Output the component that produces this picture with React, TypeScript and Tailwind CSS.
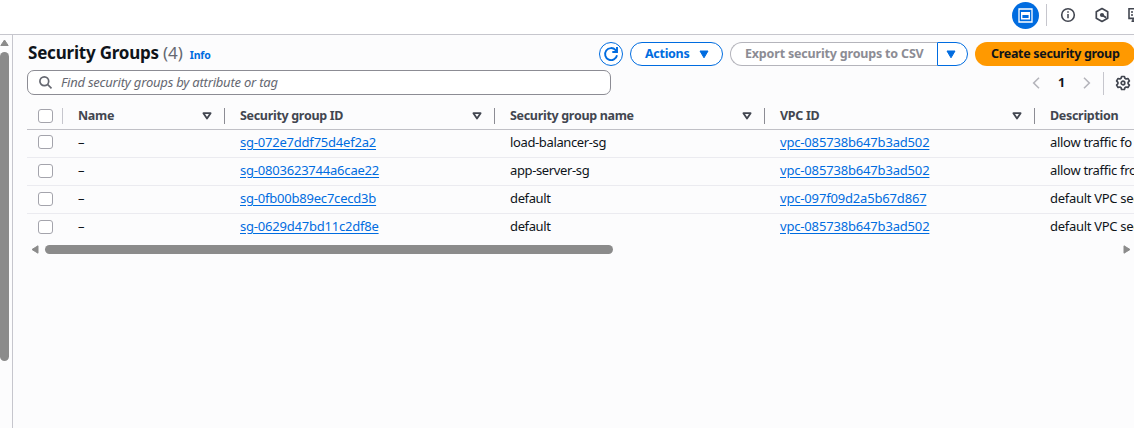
import type { ReactNode } from "react";

type Row = { id: string; name: string; vpc: string; description: string };

const rows: Row[] = [
  { id: "sg-072e7ddf75d4ef2a2", name: "load-balancer-sg", vpc: "vpc-085738b647b3ad502", description: "allow traffic fo" },
  { id: "sg-0803623744a6cae22", name: "app-server-sg", vpc: "vpc-085738b647b3ad502", description: "allow traffic fro" },
  { id: "sg-0fb00b89ec7cecd3b", name: "default", vpc: "vpc-097f09d2a5b67d867", description: "default VPC sec" },
  { id: "sg-0629d47bd11c2df8e", name: "default", vpc: "vpc-085738b647b3ad502", description: "default VPC sec" },
];

const gridCols = "grid w-[1240px] grid-cols-[36px_162px_270px_270px_270px_232px]";

function Checkbox() {
  return <span className="block h-[14px] w-[15px] shrink-0 rounded-[3px] border border-[#a4a4ac] bg-white" />;
}

function Caret() {
  return (
    <svg width="10" height="9" viewBox="0 0 10 9" className="shrink-0">
      <path d="M1 1h8L5 7.8z" fill="#006ce0" stroke="#006ce0" strokeLinejoin="round" />
    </svg>
  );
}

function HeaderCell({ children, sortable = true }: { children: ReactNode; sortable?: boolean }) {
  return (
    <div className="flex h-full items-center justify-between pr-[13px] pl-[15px]">
      <span>{children}</span>
      {sortable && (
        <svg width="10" height="8" viewBox="0 0 10 8" className="mt-px mr-[-1px]">
          <path d="M1.4 1.2h7.2L5 6.6z" fill="none" stroke="#424650" strokeWidth="1.8" strokeLinejoin="round" />
        </svg>
      )}
    </div>
  );
}

function TopBar() {
  return (
    <header className="flex h-[35px] shrink-0 border-b border-[#c6c6cd] bg-white pl-[1012px]">
      <span className="mt-[2px] flex h-[27px] w-[27px] shrink-0 items-center justify-center rounded-full bg-[#006ce0]">
        <svg width="15" height="15" viewBox="0 0 15 15" fill="none">
          <path d="M1 1h13v13H1z" stroke="#fff" strokeWidth="1.3" />
          <path d="M3.7 4.7h7.6v6H3.7z" stroke="#fff" strokeWidth="1.4" />
          <path d="M3 4h9v3H3z" fill="#fff" />
        </svg>
      </span>
      <span className="mt-[4px] ml-[7px] h-[22px] w-px shrink-0 bg-[#c6c6cd]" />
      <svg width="16" height="16" viewBox="0 0 16 16" fill="none" className="mt-[7px] ml-[13px] shrink-0">
        <circle cx="8" cy="8" r="6.3" stroke="#424650" strokeWidth="1.6" />
        <path d="M8 7v4.2M8 4.3v1.4" stroke="#424650" strokeWidth="1.5" />
      </svg>
      <svg width="16" height="16" viewBox="0 0 16 16" fill="none" className="mt-[7px] ml-[18px] shrink-0">
        <path d="M8 1.5l5.7 3.2v6.6L8 14.5l-5.7-3.2V4.7z" stroke="#424650" strokeWidth="1.7" strokeLinejoin="round" />
        <circle cx="8" cy="8" r="2.1" fill="#424650" />
        <path d="M8.5 8.2l3.7 2.6" stroke="#424650" strokeWidth="1.8" />
      </svg>
      <svg width="16" height="16" viewBox="0 0 16 16" fill="none" className="mt-[7px] ml-[17px] shrink-0">
        <path d="M2 1.8h12v9.6H2zM4.5 14.2h7M6 11.4v3" stroke="#424650" strokeWidth="1.6" />
        <path d="M4 5h2M4 8h2" stroke="#424650" strokeWidth="1.4" />
      </svg>
    </header>
  );
}

function Toolbar() {
  return (
    <div className="mt-[7px] flex h-[24px] items-center text-[12.5px] font-bold">
      <h1 className="mt-[-2px] flex w-[571px] shrink-0 items-baseline whitespace-nowrap text-[#0f141a]">
        <span className="text-[17px] tracking-[-0.21px]">Security Groups</span>
        <span className="ml-[4px] text-[17px] font-normal text-[#656871]">(4)</span>
        <span className="ml-[7px] text-[10.5px] tracking-[-0.2px] text-[#006ce0]">Info</span>
      </h1>
      <button className="flex h-[24px] w-[24px] shrink-0 items-center justify-center rounded-full border border-[#006ce0] bg-white">
        <svg width="16" height="16" viewBox="0 0 16 16" fill="none" stroke="#006ce0" strokeWidth="1.9">
          <path d="M14 9.2A6 6 0 1 1 12.6 4.1L14 5.6" />
          <path d="M14 1v5H9.3" />
        </svg>
      </button>
      <button className="ml-[7px] flex h-[24px] w-[93px] shrink-0 items-center justify-between rounded-full border border-[#006ce0] bg-white pr-[13px] pl-[14px] text-[#006ce0]">
        <span className="tracking-[-0.3px]">Actions</span>
        <Caret />
      </button>
      <div className="ml-[7px] flex h-[24px] shrink-0">
        <button className="h-full w-[207px] rounded-l-full border border-r-0 border-[#b4b4bb] bg-white pl-[14px] text-left tracking-[-0.18px] whitespace-nowrap text-[#8c8c94]">
          Export security groups to CSV
        </button>
        <button className="flex h-full w-[31px] items-center rounded-r-full border border-[#006ce0] bg-white pl-[8px]">
          <Caret />
        </button>
      </div>
      <button className="ml-[7px] h-[24px] w-[160px] shrink-0 rounded-full bg-[#ff9900] pl-[16px] text-left tracking-[-0.31px] whitespace-nowrap text-[#0f141a]">
        Create security group
      </button>
    </div>
  );
}

function SearchRow() {
  return (
    <div className="mt-[4px] flex h-[25px] items-center">
      <div className="-ml-px flex h-[25px] w-[584px] items-center rounded-[7px] border border-[#8c8c94] bg-white pl-[10px]">
        <svg width="15" height="15" viewBox="0 0 15 15" fill="none" stroke="#656871" strokeWidth="1.7">
          <circle cx="6.3" cy="6.2" r="4.4" />
          <path d="M9.5 9.4l4 3.9" />
        </svg>
        <span className="ml-[8px] text-[13px] tracking-[-0.21px] text-[#656871] italic">Find security groups by attribute or tag</span>
      </div>
      <div className="ml-[421px] flex shrink-0 items-center pt-px">
        <svg width="8" height="12" viewBox="0 0 8 12" fill="none" stroke="#b4b4bb" strokeWidth="1.6">
          <path d="M7 .8L1.7 6 7 11.2" />
        </svg>
        <span className="w-[43px] text-center text-[12.5px] font-bold text-[#0f141a]">1</span>
        <svg width="8" height="12" viewBox="0 0 8 12" fill="none" stroke="#b4b4bb" strokeWidth="1.6">
          <path d="M1 .8L6.3 6 1 11.2" />
        </svg>
        <span className="ml-[12px] h-[23px] w-px bg-[#c6c6cd]" />
        <svg width="16" height="16" viewBox="0 0 16 16" fill="none" stroke="#424650" strokeWidth="1.7" className="ml-[11px]" strokeLinejoin="round">
          <path d="M6.6 1.5h2.8l.5 1.8 1.2.7 1.8-.5 1.5 2.4L13.1 7.3v1.4l1.3 1.4-1.5 2.4-1.8-.5-1.2.7-.5 1.8H6.6l-.5-1.8-1.2-.7-1.8.5-1.5-2.4 1.3-1.4V7.3L1.6 5.9l1.5-2.4 1.8.5 1.2-.7z" />
          <circle cx="8" cy="8" r="1.8" />
        </svg>
      </div>
    </div>
  );
}

function Divider({ light = false }: { light?: boolean }) {
  return <span className={light ? "h-[16px] w-px bg-[#c6c6cd]" : "h-[16px] w-px bg-[#8c8c94]"} />;
}

function Table() {
  return (
    <div className="mt-[8px] -ml-px overflow-hidden text-[13px] leading-[18px] whitespace-nowrap text-[#0f141a]">
      <div className={`${gridCols} h-[27px] items-center border-b border-[#c0c0c6] pb-px text-[12.5px] font-bold tracking-[-0.31px] text-[#424650]`}>
        <div className="flex items-center justify-between pl-[11px]">
          <Checkbox />
          <Divider light />
        </div>
        {["Name", "Security group ID", "Security group name", "VPC ID"].map((label) => (
          <div key={label} className="flex items-center">
            <div className="flex-1">
              <HeaderCell>{label}</HeaderCell>
            </div>
            <Divider />
          </div>
        ))}
        <HeaderCell sortable={false}>Description</HeaderCell>
      </div>
      {rows.map((row, i) => (
        <div key={row.id} className={`${gridCols} h-[28px] items-center border-b pb-[3px] tracking-[-0.21px] ${i === 3 ? "border-transparent" : "border-[#ebebf0]"}`}>
          <span className={i === 0 ? "pl-[11px]" : "pt-px pl-[11px]"}><Checkbox /></span>
          <span className="pl-[15px]">–</span>
          <span className="pl-[15px]"><a className="text-[#006ce0] underline underline-offset-2">{row.id}</a></span>
          <span className="pl-[15px] tracking-[-0.37px]">{row.name}</span>
          <span className="pl-[15px] tracking-[-0.17px]"><a className="text-[#006ce0] underline underline-offset-2">{row.vpc}</a></span>
          <span className="pl-[15px] tracking-[-0.3px]">{row.description}</span>
        </div>
      ))}
    </div>
  );
}

function HorizontalScrollbar() {
  return (
    <div className="mt-[3px] -ml-px flex h-[9px] items-center pl-[4px]">
      <svg width="8" height="9" viewBox="0 0 8 9" className="shrink-0">
        <path d="M7 .8v7.4L1 4.5z" fill="#8b8b8b" stroke="#8b8b8b" strokeLinejoin="round" />
      </svg>
      <span className="ml-[6px] h-[9px] w-[568px] shrink-0 rounded-full bg-[#8b8b8b]" />
      <svg width="8" height="9" viewBox="0 0 8 9" className="ml-[510px] shrink-0">
        <path d="M1 .8v7.4l6-3.7z" fill="#8b8b8b" stroke="#8b8b8b" strokeLinejoin="round" />
      </svg>
    </div>
  );
}

export default function App() {
  return (
    <div className="flex h-[428px] w-[1134px] flex-col overflow-hidden bg-[#fcfcfd] font-['Noto_Sans',sans-serif]">
      <TopBar />
      <div className="flex min-h-0 flex-1">
        <aside className="w-[13px] shrink-0 border-r border-[#c6c6cd]">
          <svg width="9" height="8" viewBox="0 0 9 8" className="mt-[4px]">
            <path d="M4.5 1l3.7 5.5H.8z" fill="#8b8b8b" stroke="#8b8b8b" strokeLinejoin="round" />
          </svg>
          <div className="mt-[5px] h-[309px] w-[9px] rounded-full bg-[#8b8b8b]" />
        </aside>
        <main className="min-w-0 flex-1 overflow-hidden pl-[15px]">
          <Toolbar />
          <SearchRow />
          <Table />
          <HorizontalScrollbar />
        </main>
      </div>
    </div>
  );
}
